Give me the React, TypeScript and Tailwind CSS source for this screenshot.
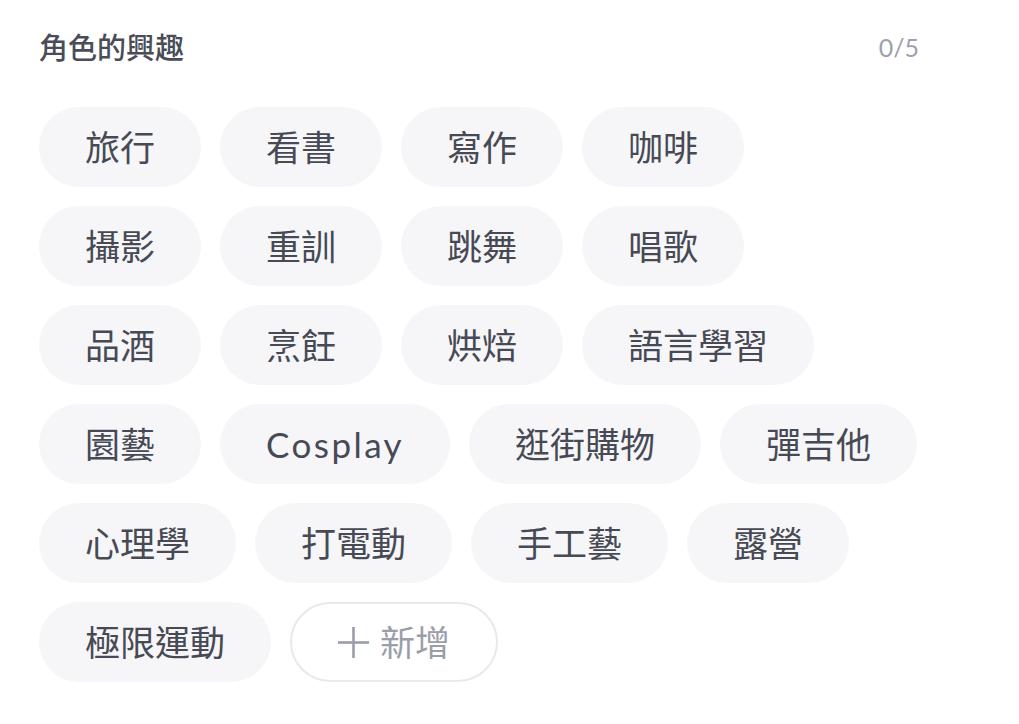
const interests = [
  '旅行', '看書', '寫作', '咖啡',
  '攝影', '重訓', '跳舞', '唱歌',
  '品酒', '烹飪', '烘焙', '語言學習',
  '園藝', 'Cosplay', '逛街購物', '彈吉他',
  '心理學', '打電動', '手工藝', '露營',
  '極限運動',
];

export default function App() {
  return (
    <div
      className="min-h-screen bg-white"
      style={{ fontFamily: 'Lato, "Noto Sans CJK TC", sans-serif' }}
    >
      <div className="ml-[39px] w-[880px] pt-[27px]">
        <div className="flex h-[40px] items-center justify-between">
          <h3 className="text-[29px] font-medium leading-none text-[#4a4d57]">角色的興趣</h3>
          <span className="text-[25px] leading-none text-[#9ca1ad]">0/5</span>
        </div>

        <div className="mt-[40px] flex flex-wrap gap-[19px]">
          {interests.map((item) => (
            <button
              key={item}
              className={
                item === 'Cosplay'
                  ? 'flex h-[80px] items-center justify-center rounded-full bg-[#f6f6f8] px-[46px] text-[35px] leading-none tracking-[0.07em] text-[#474a55]'
                  : 'flex h-[80px] items-center justify-center rounded-full bg-[#f6f6f8] px-[46px] text-[35px] leading-none text-[#474a55]'
              }
            >
              {item}
            </button>
          ))}
          <button className="flex h-[80px] items-center justify-center gap-[11px] rounded-full border-2 border-[#e8e8ee] bg-white px-[46px] text-[35px] leading-none text-[#9a9ea9]">
            <svg width="31" height="31" viewBox="0 0 31 31" fill="none" stroke="currentColor" strokeWidth="2.6">
              <line x1="15.5" y1="0" x2="15.5" y2="31" />
              <line x1="0" y1="15.5" x2="31" y2="15.5" />
            </svg>
            新增
          </button>
        </div>
      </div>
    </div>
  );
}
